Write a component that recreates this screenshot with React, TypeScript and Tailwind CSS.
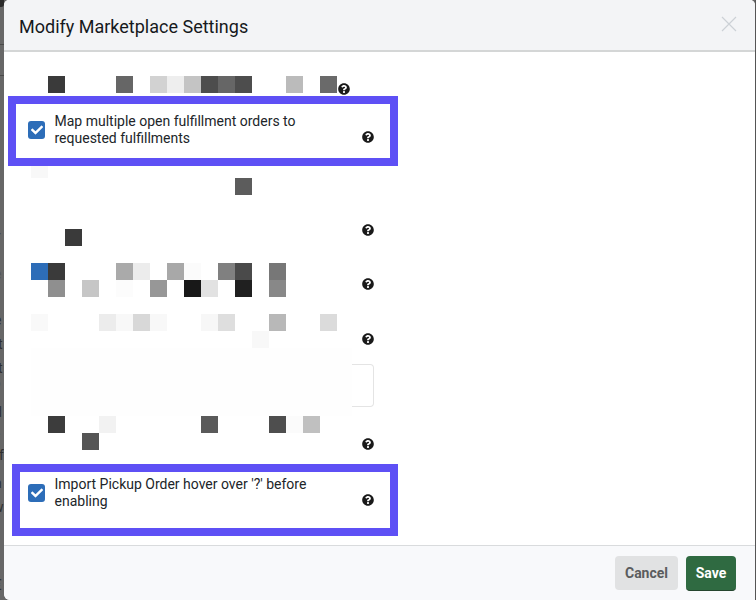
import { FaCheck, FaQuestionCircle } from 'react-icons/fa'

type MosaicProps = {
    cells: string[]
    rows?: string
    className?: string
}

// blurred-out label text, one block per col/row
function Mosaic({ cells, rows = 'auto-rows-[17px]', className = '' }: MosaicProps) {
    return (
        <div className={`grid w-[306px] shrink-0 grid-cols-[repeat(18,17px)] ${rows} ${className}`}>
            {cells.map((c, i) => (
                <div key={i} className={c}></div>
            ))}
        </div>
    )
}

function Help({ className = '' }: { className?: string }) {
    return <FaQuestionCircle size={12} className={`shrink-0 text-[#1a1a1a] ${className}`} />
}

function CheckBox({ className = '' }: { className?: string }) {
    return (
        <div className={`flex h-[18px] w-[17px] shrink-0 items-center justify-center rounded-[3px] bg-[#2d6db8] ${className}`}>
            <FaCheck size={12} className="text-white" />
        </div>
    )
}

function Callout({ label, className = '', height }: { label: string; className?: string; height: string }) {
    return (
        <div className={`shrink-0 border-[8px] border-[#5e50f5] ${height} ${className}`}>
            <div className="flex items-start text-[14px] leading-[17px] text-[#212529]">
                {label.startsWith('Map') ? (
                    <>
                        <CheckBox className="ml-3 mt-[17px]" />
                        <p className="ml-[9.5px] mt-[9px] w-[290px]">{label}</p>
                        <Help className="ml-[17.5px] mt-[27px]" />
                    </>
                ) : (
                    <>
                        <CheckBox className="ml-2 mt-[12px]" />
                        <p className="ml-[9.5px] mt-[4px] w-[290px]">{label}</p>
                        <Help className="ml-[17.5px] mt-[22px]" />
                    </>
                )}
            </div>
        </div>
    )
}

export default function App() {
    return (
        <div className="flex h-[600px] w-[756px] overflow-hidden bg-[#676767] font-['Roboto',sans-serif]">
            {/* what's left of the page behind the dialog */}
            <div className="flex w-[4px] shrink-0 flex-col overflow-hidden text-[14px] leading-[14px] text-[#2f2f2f]">
                <div className="h-[7px] w-full shrink-0 rounded-br-[3px] bg-[#2a2a2a]"></div>
                <div className="mt-[37px] h-px w-full shrink-0 bg-[#4a4a4a]"></div>
                <div className="mt-[30px] h-px w-full shrink-0 bg-[#4a4a4a]"></div>
                <span className="-ml-1 mt-[153px] shrink-0 text-[#444]">r</span>
                <span className="-ml-[6px] mt-[24px] shrink-0 text-[#555]">e</span>
                <span className="-ml-[6px] mt-[32px] shrink-0">e</span>
                <span className="-ml-[2px] mt-[10px] shrink-0">t</span>
                <span className="-ml-[2px] mt-[10px] shrink-0">t</span>
                <span className="-ml-[5px] mt-[2px] shrink-0 text-[10px] text-[#555]">o</span>
                <span className="-ml-[6px] mt-[14px] shrink-0">d</span>
                <span className="-ml-[5px] mt-[9px] shrink-0 text-[10px] text-[#555]">e</span>
                <span className="-ml-[1px] mt-[6px] shrink-0">f</span>
                <span className="-ml-[6px] mt-[14px] shrink-0">n</span>
                <span className="-ml-[7px] mt-[10px] shrink-0">w</span>
                <span className="-ml-[6px] mt-[64px] shrink-0">€</span>
            </div>

            <div className="flex w-[751px] shrink-0 flex-col overflow-hidden rounded-t-[5px] rounded-bl-[6px] bg-white">
                <div className="flex h-[52px] shrink-0 items-center justify-between border-b-2 border-[#d4d6d6] bg-[#f3f4f6] pl-[15px] pr-[18px]">
                    <h1 className="mt-[2px] text-[18px] font-normal text-[#16191c]">Modify Marketplace Settings</h1>
                    <svg width="16" height="16" viewBox="0 0 16 16" className="-mt-[2px] text-[#ccd1d6]">
                        <path d="M1 1 15 15M15 1 1 15" stroke="currentColor" strokeWidth="1.2" fill="none" />
                    </svg>
                </div>

                <div className="flex flex-1 flex-col">
                    <div className="mt-[24px] flex h-[20px] pl-[27px]">
                        <Mosaic
                            cells={[
                                'col-start-2 bg-[#3a3a3a]',
                                'col-start-6 bg-[#666666]',
                                'col-start-8 bg-[#d2d2d2]',
                                'col-start-9 bg-[#eeeeee]',
                                'col-start-10 bg-[#c4c4c4]',
                                'col-start-11 bg-[#4d4d4d]',
                                'col-start-12 bg-[#666666]',
                                'col-start-13 bg-[#4d4d4d]',
                                'col-start-16 bg-[#bbbbbb]',
                                'col-start-18 bg-[#6a6a6a]',
                            ]}
                        />
                        <Help className="ml-px mt-[7px]" />
                    </div>

                    <Callout
                        label="Map multiple open fulfillment orders to requested fulfillments"
                        height="h-[70px]"
                        className="ml-1 w-[390px]"
                    />

                    <div className="flex pl-[27px]">
                        <Mosaic
                            rows="grid-rows-[12px_17px]"
                            cells={['col-start-1 row-start-1 bg-[#f8f8f8]', 'col-start-13 row-start-2 bg-[#5c5c5c]']}
                        />
                    </div>

                    <div className="mt-[29px] flex pl-[27px]">
                        <Mosaic className="mt-[5px]" cells={['col-start-3 bg-[#3a3a3a]']} />
                        <Help className="ml-[25px]" />
                    </div>

                    <div className="mt-[17px] flex pl-[27px]">
                        <Mosaic
                            cells={[
                                'col-start-1 row-start-1 bg-[#2d6db8]',
                                'col-start-2 row-start-1 bg-[#3a3a3a]',
                                'col-start-6 row-start-1 bg-[#aaaaaa]',
                                'col-start-7 row-start-1 bg-[#ececec]',
                                'col-start-9 row-start-1 bg-[#a8a8a8]',
                                'col-start-10 row-start-1 bg-[#fbfbfb]',
                                'col-start-12 row-start-1 bg-[#808080]',
                                'col-start-13 row-start-1 bg-[#4a4a4a]',
                                'col-start-15 row-start-1 bg-[#777777]',
                                'col-start-2 row-start-2 bg-[#8f8f8f]',
                                'col-start-4 row-start-2 bg-[#c6c6c6]',
                                'col-start-6 row-start-2 bg-[#fcfcfc]',
                                'col-start-8 row-start-2 bg-[#979797]',
                                'col-start-10 row-start-2 bg-[#181818]',
                                'col-start-11 row-start-2 bg-[#e2e2e2]',
                                'col-start-13 row-start-2 bg-[#202020]',
                                'col-start-15 row-start-2 bg-[#888888]',
                            ]}
                        />
                        <Help className="ml-[25px] mt-[15px]" />
                    </div>

                    <div className="mt-[17px] flex pl-[27px]">
                        <Mosaic
                            cells={[
                                'col-start-1 row-start-1 bg-[#f9f9f9]',
                                'col-start-5 row-start-1 bg-[#ececec]',
                                'col-start-6 row-start-1 bg-[#f8f8f8]',
                                'col-start-7 row-start-1 bg-[#d8d8d8]',
                                'col-start-8 row-start-1 bg-[#f8f8f8]',
                                'col-start-11 row-start-1 bg-[#f7f7f7]',
                                'col-start-12 row-start-1 bg-[#dedede]',
                                'col-start-15 row-start-1 bg-[#b8b8b8]',
                                'col-start-18 row-start-1 bg-[#dbdbdb]',
                                'col-start-14 row-start-2 bg-[#f8f8f8]',
                            ]}
                        />
                        <Help className="ml-[25px] mt-[19px]" />
                    </div>

                    <div className="flex h-[68px] pl-[27px]">
                        <div className="w-[321px] bg-[#fefefe]"></div>
                        <div className="mt-4 h-[43px] w-[22px] rounded-r-[4px] border border-l-0 border-[#e4e4e4]"></div>
                    </div>

                    <div className="flex pl-[27px]">
                        <Mosaic
                            cells={[
                                'col-start-2 row-start-1 bg-[#3c3c3c]',
                                'col-start-5 row-start-1 bg-[#f2f2f2]',
                                'col-start-11 row-start-1 bg-[#5a5a5a]',
                                'col-start-15 row-start-1 bg-[#4e4e4e]',
                                'col-start-16 row-start-1 bg-[#fbfbfb]',
                                'col-start-17 row-start-1 bg-[#c0c0c0]',
                                'col-start-4 row-start-2 bg-[#555555]',
                            ]}
                        />
                        <Help className="ml-[25px] mt-[22px]" />
                    </div>

                    <Callout
                        label="Import Pickup Order hover over '?' before enabling"
                        height="h-[72px]"
                        className="ml-2 mt-[14px] w-[386px]"
                    />
                </div>

                <div className="flex h-[55px] shrink-0 items-start justify-end gap-2 border-t border-[#d9dbdd] bg-[#f8f9fb] pr-[19px] pt-[10px]">
                    <button className="h-[34px] w-[63px] rounded-[4px] bg-[#e1e2e3] text-[14px] font-bold text-[#5a5c5e]">
                        Cancel
                    </button>
                    <button className="h-[35px] w-[50px] rounded-[4px] border-b border-[#24452e] bg-[#2f6a41] text-[14px] font-bold text-white">
                        Save
                    </button>
                </div>
            </div>

            <div className="w-px shrink-0 bg-[#555555]"></div>
        </div>
    )
}
